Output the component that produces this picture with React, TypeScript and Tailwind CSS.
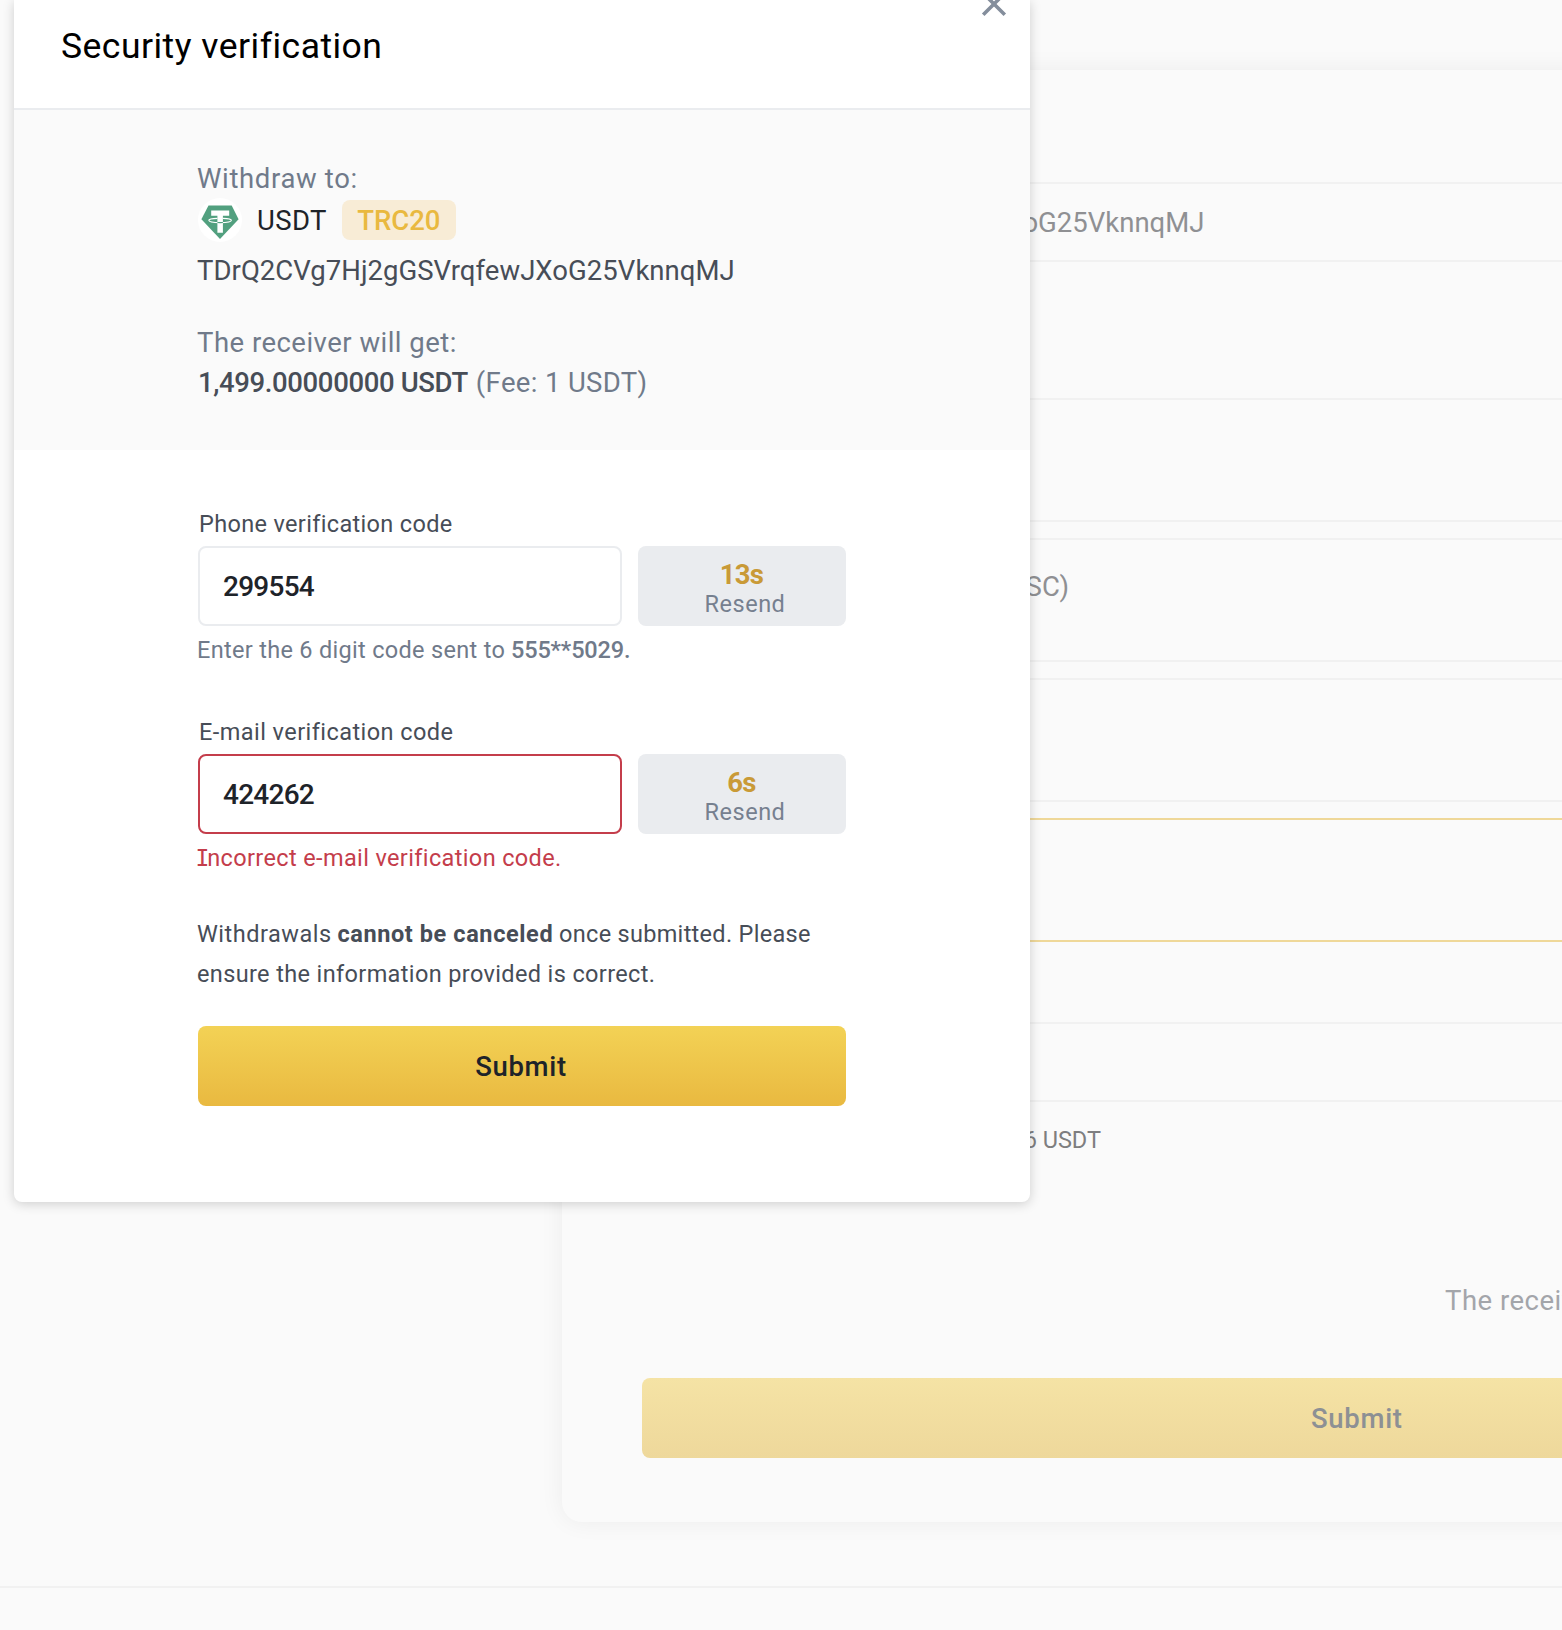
import { type ReactNode } from "react";

function T({ className = "", children }: { className?: string; children: ReactNode }) {
  return <span className={"inline-block whitespace-nowrap " + className}>{children}</span>;
}

function TetherLogo() {
  return (
    <svg width="44" height="44" viewBox="0 0 44 44" className="block">
      <circle cx="22" cy="22" r="22" fill="#fff" />
      <path d="M10.5 7.5h23.2L40.6 21.2 22 41 3.4 21.2z" fill="#52a07f" />
      <path d="M13.2 12.4h18v5.3h-6.3v17H19.4v-17h-6.2z" fill="#fff" />
      <path d="M19.4 20.4c-5 .2-8.6.9-8.6 1.9 0 1.3 5 2.3 11.3 2.3s11.3-1 11.3-2.3c0-1-3.600-1.700-8.500-1.900" fill="none" stroke="#fff" strokeWidth="1.1" />
      <path d="M19.400 24.500c1.800.150 3.700.150 5.500 0" fill="none" stroke="#52a07f" strokeWidth="1.100" />
    </svg>
  );
}

function CodeField({ label, value, seconds, error = false }: { label: ReactNode; value: ReactNode; seconds: ReactNode; error?: boolean }) {
  return (
    <div>
      <div className="h-7 pl-px text-[23.5px] leading-7 text-[#474d57]">{label}</div>
      <div className="mt-2 flex gap-4">
        <div className={"flex h-20 w-[424px] items-center rounded-lg border-2 pl-[23px] pt-px text-[28px] leading-10 font-medium tracking-[-0.75px] text-[#1e2329] " + (error ? "border-[#c43d4b]" : "border-[#eaecef]")}>
          {value}
        </div>
        <div className="flex h-20 w-52 flex-col items-center rounded-lg bg-[#eaecef] pt-[15px]">
          <div className="h-7 pr-px text-[27.5px] leading-7 font-bold tracking-[-0.8px] text-[#c99a37]">{seconds}</div>
          <div className="mt-px h-7 pl-1.5 text-[23.5px] leading-7 tracking-[0.5px] text-[#76808f]"><T>Resend</T></div>
        </div>
      </div>
    </div>
  );
}

function WithdrawCard() {
  return (
    <div className="ml-[562px] mt-[70px] h-[1452px] w-[1588px] rounded-[20px] bg-[#fafafa] px-20 pt-28 shadow-[0_0_24px_rgba(0,0,0,0.06)]">
      <div className="h-20 rounded-lg border-2 border-[#f1f1f1] pl-6 pt-[19px] text-[27.5px] leading-10 text-[#8f9093]">
        <T>TDrQ2CVg7Hj2gGSVrqfewJXoG25VknnqMJ</T>
      </div>
      <div className="mt-[136px] h-[124px] rounded-lg border-2 border-[#f1f1f1]" />
      <div className="mt-4 h-[124px] rounded-lg border-2 border-[#f1f1f1] pt-[27px]">
        <div className="w-[425px] text-right text-[27.5px] leading-10 text-[#8f9093]"><T>BEP20 (BSC)</T></div>
      </div>
      <div className="mt-4 h-[124px] rounded-lg border-2 border-[#f1f1f1]" />
      <div className="mt-4 h-[124px] rounded-lg border-2 border-[#efd899]" />
      <div className="mt-20 h-20 rounded-lg border-2 border-[#f1f1f1]" />
      <div className="mt-[22px] h-8 w-[459px] text-right text-[23.5px] leading-8 text-[#7e7e80]"><T>6 USDT</T></div>
      <div className="mt-[125px] h-10 pl-[803px] text-[27.5px] leading-10 tracking-[0.5px] text-[#a3a5aa]"><T>The receiver will get</T></div>
      <div className="mt-[57px] h-20 rounded-lg bg-linear-to-b from-[#f5e3a5] to-[#eed89b] pl-[669px] pt-[21px] text-[27.5px] leading-10 font-medium tracking-[0.7px] text-[#8d9094]">
        <T>Submit</T>
      </div>
    </div>
  );
}

function Dialog() {
  return (
    <div className="absolute left-3.5 top-0 h-[1202px] w-[1016px] rounded-b-lg bg-white shadow-[0_2px_12px_rgba(0,0,0,0.18)]">
      <svg className="absolute left-[967px] top-[-8px]" width="26" height="26" viewBox="0 0 26 26" fill="none" stroke="#848e9c" strokeWidth="3.6">
        <path d="M2.200 1.200 23.800 22.800M23.800 1.200 2.200 22.800" />
      </svg>
      <div className="h-[110px] border-b-2 border-[#eaecef] pl-[47px] pt-6 text-[35.5px] leading-[44px] tracking-[0.48px] text-black">
        <T>Security verification</T>
      </div>
      <div className="h-[340px] bg-[#fafafa] pl-[184px] pt-[49px] text-[27.5px] leading-10">
        <div className="-ml-px h-10 tracking-[0.65px] text-[#707a8a]"><T>Withdraw to:</T></div>
        <div className="mt-px flex h-10 items-center text-[#1e2329]">
          <TetherLogo />
          <T className="ml-[15px] pt-0.5 tracking-[0.4px]">USDT</T>
          <div className="ml-[15px] flex h-10 w-[114px] justify-center rounded-lg bg-[#f8ecd6] pt-px font-medium text-[#e9b940]"><T>TRC20</T></div>
        </div>
        <div className="-ml-px mt-[11px] h-10 tracking-[0.04px] text-[#474d57]"><T>TDrQ2CVg7Hj2gGSVrqfewJXoG25VknnqMJ</T></div>
        <div className="-ml-px mt-8 h-10 tracking-[0.48px] text-[#707a8a]"><T>The receiver will get:</T></div>
        <div className="flex h-10 text-[#707a8a]">
          <T className="font-medium tracking-[-0.37px] text-[#474d57]">1,499.00000000 USDT</T>
          <T className="ml-2 tracking-[0.35px]">(Fee: 1 USDT)</T>
        </div>
      </div>
      <div className="ml-[184px] w-[648px] pt-[60px] text-[23.5px]">
        <CodeField label={<T className="tracking-[0.34px]">Phone verification code</T>} value={<T>299554</T>} seconds={<T>13s</T>} />
        <div className="-ml-px mt-2 h-8 leading-8 text-[#707a8a]"><T className="tracking-[0.31px]">Enter the 6 digit code sent to</T> <T className="font-medium tracking-[-0.15px]">555**5029.</T></div>
        <div className="mt-[52px]">
          <CodeField error label={<T className="tracking-[0.44px]">E-mail verification code</T>} value={<T>424262</T>} seconds={<T>6s</T>} />
        </div>
        <div className="-ml-px mt-2 flex h-8 leading-8 text-[#c43d4b]">
          <T className="tracking-[0.37px]"><span className="-ml-[1.5px] mr-[-2.5px] font-['DejaVu_Sans_Mono',monospace] text-[23px] leading-none">I</span>ncorrect e-mail verification code.</T>
        </div>
        <div className="-ml-px mt-10 h-20 w-[660px] leading-10 text-[#474d57]">
          <div><T className="tracking-[0.5px]">Withdrawals</T> <T className="font-bold tracking-[0.6px]">cannot be canceled</T> <T className="tracking-[0.3px]">once submitted. Please</T></div>
          <div><T className="tracking-[0.37px]">ensure the information provided is correct.</T></div>
        </div>
        <div className="mt-8 flex h-20 justify-center rounded-lg bg-linear-to-b from-[#f3d255] to-[#e9b940] pr-0.5 pt-[21px] text-[27.5px] leading-10 font-medium tracking-[0.7px] text-[#1e2329]"><T>Submit</T></div>
      </div>
    </div>
  );
}

export default function App() {
  return (
    <div className="relative flex h-[1630px] w-[1562px] flex-col overflow-hidden bg-[#fafafa] font-[Roboto,sans-serif]">
      <WithdrawCard />
      <div className="mt-16 h-0.5 shrink-0 bg-[#f1f1f1]" />
      <Dialog />
    </div>
  );
}
